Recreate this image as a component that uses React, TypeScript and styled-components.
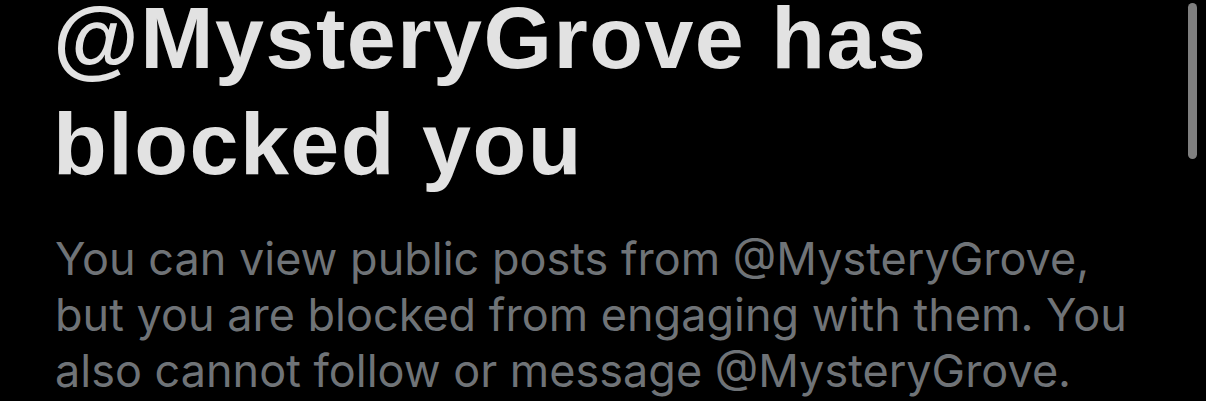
import styled, { createGlobalStyle } from 'styled-components'

const GlobalStyle = createGlobalStyle`
  html, body {
    margin: 0;
    padding: 0;
    background: #000000;
    overflow: hidden;
  }
`

const Screen = styled.div`
  position: relative;
  width: 1206px;
  height: 401px;
  background: #000000;
  overflow: hidden;
`

const Content = styled.div`
  display: flex;
  flex-direction: column;
  gap: 34px;
  padding: 0 40px 0 55px;
`

const Title = styled.h1`
  margin: -15px 0 0 -2px;
  max-width: 1000px;
  font-family: 'Liberation Sans', Arial, sans-serif;
  font-weight: 700;
  font-size: 88px;
  line-height: 106px;
  letter-spacing: 1.5px;
  color: #e2e2e2;
`

const Body = styled.p`
  margin: 0;
  max-width: 1100px;
  font-family: Inter, 'Noto Sans', sans-serif;
  font-weight: 400;
  font-size: 45px;
  line-height: 56px;
  color: #6f7377;
`

const ScrollThumb = styled.div`
  position: absolute;
  top: 3px;
  right: 9px;
  width: 9px;
  height: 156px;
  border-radius: 5px;
  background: #7f7f7f;
`

const App = () => {
  return (
    <Screen>
      <GlobalStyle />
      <Content>
        <Title>@MysteryGrove has blocked you</Title>
        <Body>
          You can view public posts from @MysteryGrove, but you are blocked from
          engaging with them. You also cannot follow or message @MysteryGrove.
        </Body>
      </Content>
      <ScrollThumb />
    </Screen>
  )
}

export default App
